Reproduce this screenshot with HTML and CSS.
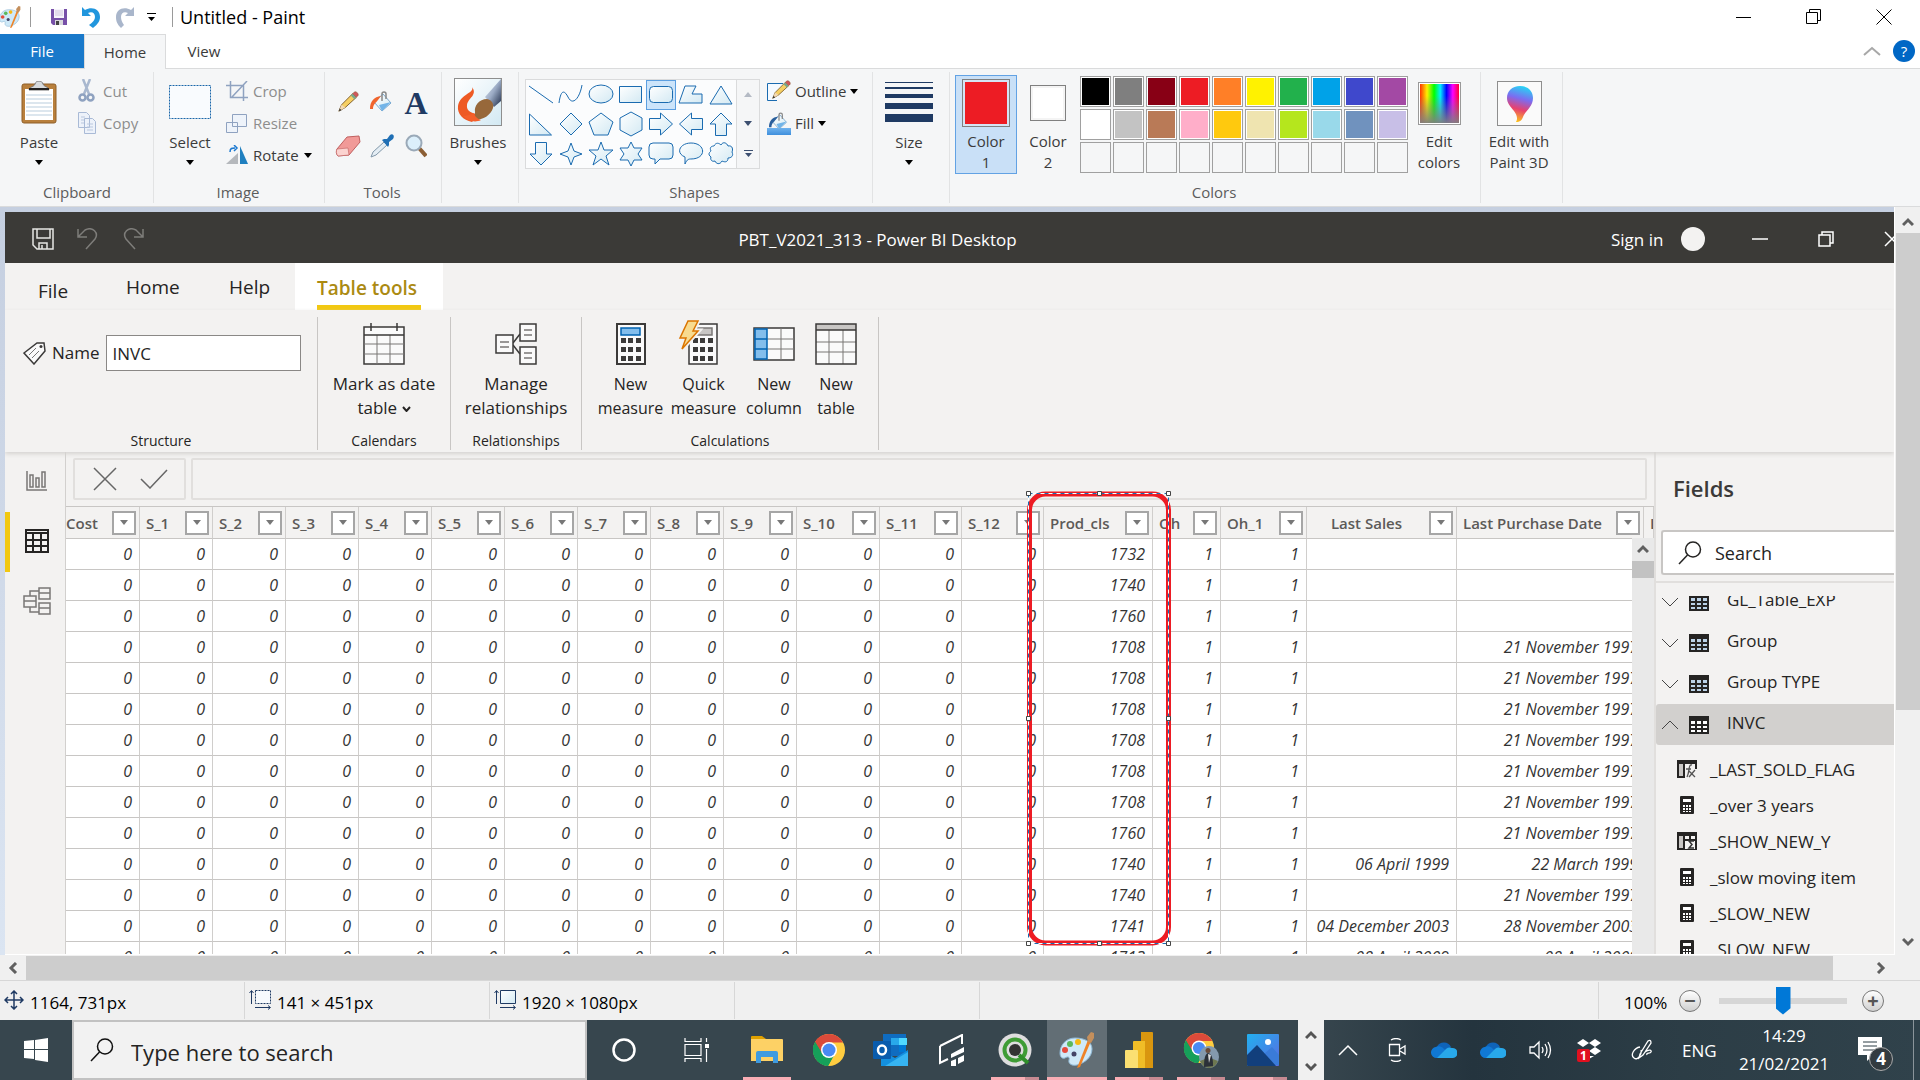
FILE: index.html
```html
<!DOCTYPE html>
<html lang="en">
<head>
<meta charset="utf-8">
<title>Untitled - Paint</title>
<link rel="stylesheet" href="styles.css">
</head>
<body>
<svg class="defs" aria-hidden="true">
  <defs>
    <linearGradient id="pale" x1="0" y1="0" x2="1" y2="1"><stop offset="0" stop-color="#fff"/><stop offset="1" stop-color="#d3e9f3"/></linearGradient>
    <linearGradient id="blueG" x1="0" y1="0" x2="0" y2="1"><stop offset="0" stop-color="#6fb2ee"/><stop offset="1" stop-color="#3f8fdc"/></linearGradient>
    <linearGradient id="steel" x1="0" y1="0" x2="1" y2="1"><stop offset="0" stop-color="#e8eef8"/><stop offset=".5" stop-color="#9aaac4"/><stop offset="1" stop-color="#1e2c48"/></linearGradient>
    <linearGradient id="rainbow"><stop offset="0" stop-color="#f30"/><stop offset=".18" stop-color="#fe0"/><stop offset=".36" stop-color="#0f0"/><stop offset=".52" stop-color="#0ef"/><stop offset=".68" stop-color="#00f"/><stop offset=".84" stop-color="#f0f"/><stop offset="1" stop-color="#f03"/></linearGradient>
    <linearGradient id="fadeGrey" x1="0" y1="0" x2="0" y2="1"><stop offset=".3" stop-color="#808080" stop-opacity="0"/><stop offset="1" stop-color="#808080" stop-opacity=".95"/></linearGradient>
    <linearGradient id="p3d" x1=".6" y1="0" x2=".4" y2="1"><stop offset="0" stop-color="#25d5f5"/><stop offset=".35" stop-color="#7c6cf0"/><stop offset=".65" stop-color="#e8416e"/><stop offset="1" stop-color="#fcc419"/></linearGradient>
    <linearGradient id="sky" x1="0" y1="0" x2="1" y2="1"><stop offset="0" stop-color="#22b0f0"/><stop offset="1" stop-color="#5a6be0"/></linearGradient>
    <symbol id="caret" viewBox="0 0 8 5"><path d="M0 0h8L4 5z" fill="currentColor"/></symbol>
    <symbol id="chev-up" viewBox="0 0 12 10"><path d="M1 8l5-5 5 5" fill="none" stroke="currentColor" stroke-width="3"/></symbol>
    <symbol id="calc" viewBox="0 0 14 18"><rect width="14" height="18" rx="1" fill="#252423"/><path d="M3 3h8v3H3zM3 9h2v2H3zm3 0h2v2H6zm3 0h2v2H9zM3 12h2v2H3zm3 0h2v2H6zm3 0h2v2H9zM3 15h2v1H3zm3 0h2v1H6zm3 0h2v1H9z" fill="#fff"/></symbol>
    <symbol id="grid" viewBox="0 0 20 18"><path d="M0 0h20v18H0z" fill="#252423"/><path d="M2 5h4v3H2zm6 0h4v3H8zm6 0h4v3h-4zM2 10h4v2H2zm6 0h4v2H8zm6 0h4v2h-4zM2 14h4v2H2zm6 0h4v2H8zm6 0h4v2h-4z" fill="currentColor"/></symbol>
    <symbol id="palette" viewBox="0 0 36 36"><path d="M16 6C7 6 1 13 1 21c0 4 2 6 5 5 3-2 5-1 4 2-1 4 3 6 8 5 8-2 15-8 15-16 0-7-7-11-17-11z" fill="#cfe9f8" stroke="#8fb8d4"/><circle cx="15" cy="22" r="2.5" fill="#446"/><circle cx="6" cy="18" r="3" fill="#e54b3c"/><circle cx="11" cy="12" r="3" fill="#5cb85c"/><circle cx="19" cy="10" r="3" fill="#f5b915"/><path d="M29 8l3 1-11 26-3 1z" fill="#ee8327"/><path d="M29 10l-1-5 4-5 3 1 0 5-3 5z" fill="#c48f5c"/></symbol>
    <symbol id="cloud" viewBox="0 0 26 18"><path d="M7 17a6 6 0 0 1-1-11.500A8 8 0 0 1 20 6z" fill="#0f63b8"/><path d="M5 6a6 6 0 0 1 8 2l7 6-12 3H6A5.500 5.500 0 0 1 5 6z" fill="#1078d4"/><path d="M15 8a6 6 0 0 1 6-1 5 5 0 0 1 1 10H6z" fill="#28a8ea"/></symbol>
    <symbol id="chrome" viewBox="0 0 34 34"><circle cx="17" cy="17" r="16" fill="#ffcd40"/><path d="M17 17L3 9A16 16 0 0 1 31 9.500H17z" fill="#db4a3a"/><path d="M3.100 9A16 16 0 0 0 16 33l7-12.500L17 17z" fill="#0f9d58"/><path d="M3.100 9L10 21l7-4V9z" fill="#db4a3a"/><path d="M10.500 21L3.100 9A16 16 0 0 0 16 33l6.500-12z" fill="#16a05a"/><circle cx="17" cy="17" r="8" fill="#fff"/><circle cx="17" cy="17" r="6.500" fill="#4a8af4"/></symbol>
    <symbol id="bucket" viewBox="0 0 24 24"><path d="M4 12L13 4l8 9-9 8z" fill="url(#pale)" stroke="#7aa7cd"/><path d="M9 15l12-3-9 9z" fill="#72b4e8"/><path d="M12 11V4a2 2 0 0 1 4 0v5" fill="none" stroke="#888" stroke-width="1.500"/><path d="M11 6C4 7 0 11 0 19h3c0-5 3-6 5-9z" fill="currentColor"/></symbol>
    <symbol id="pencil" viewBox="0 0 24 24"><path d="M2 22l3-7L17 3l4 4L9 18z" fill="#f6cf62" stroke="#7b5a28"/><path d="M2 22l3-7 4 3z" fill="#f2d9b4"/><path d="M2 22l1-3 2 2z" fill="#333"/><path d="M17 3l2-2c2-1 5 2 4 4l-2 2z" fill="#d1575b" stroke="#7b5a28" stroke-width=".5"/><path d="M15 5l2-2 4 4-2 2z" fill="#7aa58c"/></symbol>
  </defs>
</svg>

<header class="titlebar">
  <div class="quick">
    <svg class="app-logo" viewBox="3 0 33 36"><use href="#palette"/></svg>
    <span class="rule"></span>
    <button aria-label="Save"><svg width="16" height="16" viewBox="0 0 16 16"><path d="M0 0h16v16H2l-2-2z" fill="#7750a8"/><path d="M3 0h10v9H3z" fill="#f7f4fb"/><path d="M4 2h8M4 4h8M4 6h8" stroke="#cfc5dd"/><path d="M4 11h8v5H4z" fill="#d8d8dc"/><path d="M5 12h3v4H5z" fill="#444"/></svg></button>
    <button aria-label="Undo"><svg width="20" height="22" viewBox="0 0 20 22"><path d="M1 1v9h9L7 7c4-2 7 0 7 4 0 3-2 5-6 8l4 3c5-4 7-7 7-11 0-8-8-11-15-7z" fill="#2196dd"/></svg></button>
    <button aria-label="Redo"><svg width="20" height="22" viewBox="0 0 20 22"><path d="M19 1v9h-9l3-3c-4-2-7 0-7 4 0 3 1 5 3 8l-3 3C2 18 1 15 1 11 1 3 9 0 16 4z" fill="#a9b6cb"/></svg></button>
    <button aria-label="Customize"><svg width="9" height="8" viewBox="0 0 9 8"><path d="M0 0h9v1H0zM1 4h7L4.500 8z"/></svg></button>
    <span class="rule"></span>
    <h1>Untitled - Paint</h1>
  </div>
  <div class="winbtns">
    <button aria-label="Minimize"><svg width="16" height="16" viewBox="0 0 16 16"><path d="M0 8.500h15" stroke="#000"/></svg></button>
    <button aria-label="Restore"><svg width="16" height="16" viewBox="0 0 16 16"><path d="M.5 3.500h11v11H.5zM3.500 3.500v-3h11v11h-3" fill="none" stroke="#000"/></svg></button>
    <button aria-label="Close"><svg width="16" height="16" viewBox="0 0 16 16"><path d="M.5.5l15 15m0-15l-15 15" stroke="#000"/></svg></button>
  </div>
</header>

<nav class="tabs">
  <button class="tab file">File</button><button class="tab active">Home</button><button class="tab">View</button>
  <div class="tabs-right">
    <svg width="18" height="10" viewBox="0 0 18 10"><path d="M1 9l8-7 8 7" fill="none" stroke="#a8a8a8" stroke-width="2"/></svg>
    <button class="help" aria-label="Help">?</button>
  </div>
</nav>

<section class="ribbon">
  <div class="group g-clip">
    <div class="tools">
      <button class="big"><span class="pic"><svg width="36" height="43" viewBox="0 0 36 43"><rect x="1" y="3" width="34" height="39" rx="2" fill="#b9803d" stroke="#8f5f28"/><path d="M4 8h28v31H4z" fill="#fff"/><path d="M5 14h26M5 18h26M5 22h26M5 26h26M5 30h26M5 34h26" stroke="#b9cddd"/><path d="M8 9c1-4 5-3 6-6 1-4 7-4 8 0 1 3 5 2 6 6z" fill="#d7dadd" stroke="#777"/><path d="M8 8h20" stroke="#222" stroke-width="2"/></svg></span><span>Paste</span><svg class="caret"><use href="#caret"/></svg></button>
      <div class="stack">
        <button class="row off"><svg width="18" height="24" viewBox="0 0 18 24"><path d="M5 0l6 15M12 0L6 15" stroke="#a9b8cf" stroke-width="2.500"/><circle cx="4.500" cy="18.500" r="3" fill="none" stroke="#8fa2c0" stroke-width="2.500"/><circle cx="12.500" cy="18.500" r="3" fill="none" stroke="#8fa2c0" stroke-width="2.500"/></svg>Cut</button>
        <button class="row off"><svg width="18" height="22" viewBox="0 0 18 22"><path d="M.5.500h8l3 3v12H.5zM6.500 6.500h8l3 3v12h-11z" fill="#edf2fa" stroke="#a9bad6"/><path d="M3 5h4M3 8h3M3 11h3M9 12h6M9 15h6M9 18h6" stroke="#b9c7de"/></svg>Copy</button>
      </div>
    </div>
    <div class="label">Clipboard</div>
  </div>
  <div class="group g-image">
    <div class="tools">
      <button class="big"><span class="pic"><svg width="42" height="34" viewBox="0 0 42 34"><rect x=".5" y=".5" width="41" height="33" fill="#f9fbfe" stroke="#1a66aa" stroke-dasharray="2 1"/></svg></span><span>Select</span><svg class="caret"><use href="#caret"/></svg></button>
      <div class="stack">
        <button class="row off"><svg width="22" height="20" viewBox="0 0 22 20"><path d="M0 4.500h17.500V20M4.500 0v16.500H22M6 16L21 0" fill="none" stroke="#8fa2c0" stroke-width="1.500"/></svg>Crop</button>
        <button class="row off"><svg width="22" height="19" viewBox="0 0 22 19"><path d="M.5 8.500h11v10H.5zM6.500.500h14v12h-14z" fill="#eef3fa" stroke="#8fa2c0"/></svg>Resize</button>
        <button class="row"><svg width="22" height="20" viewBox="0 0 22 20"><path d="M14 1l8 18h-8z" fill="#1f7fbf"/><path d="M12 8v11H0z" fill="#b5b8bc"/><path d="M4 7c0-4 2-4 5-4M8 0l3 3-3 3" fill="none" stroke="#1a78d0" stroke-width="1.500"/></svg>Rotate<svg class="caret"><use href="#caret"/></svg></button>
      </div>
    </div>
    <div class="label">Image</div>
  </div>
  <div class="group g-tools">
    <div class="toolgrid">
      <button aria-label="Pencil"><svg width="22" height="22" viewBox="0 0 24 24"><use href="#pencil"/></svg></button>
      <button aria-label="Fill with color" class="orange"><svg width="24" height="24"><use href="#bucket"/></svg></button>
      <button aria-label="Text" class="text-a">A</button>
      <button aria-label="Eraser"><svg width="26" height="22" viewBox="0 0 26 22"><path d="M2 14L12 2l12-1 1 6-11 13-11 1c-2-2-2-5-1-7z" fill="#f19a98" stroke="#c0605f"/><path d="M2 14l11-1 1 7-11 1c-2-2-2-5-1-7z" fill="#fbd3d0" stroke="#c0605f" stroke-width=".6"/></svg></button>
      <button aria-label="Color picker"><svg width="24" height="24" viewBox="0 0 24 24"><path d="M1 23l2-5L14 8l3 3L6 21z" fill="#e4edf4" stroke="#8298aa"/><path d="M12 6l2-1 3 0 3-4c3-2 5 1 3 4l-4 3v3l-1 2z" fill="#1f6fb5"/></svg></button>
      <button aria-label="Magnifier"><svg width="22" height="24" viewBox="0 0 22 24"><path d="M14 14l7 8" stroke="#8b5e34" stroke-width="4"/><circle cx="9" cy="9" r="7.500" fill="#dceffb" stroke="#9aa9b8" stroke-width="2"/></svg></button>
    </div>
    <div class="label">Tools</div>
  </div>
  <div class="group g-brush">
    <div class="tools">
      <button class="big"><span class="pic framed"><svg width="46" height="46" viewBox="0 0 46 46"><path d="M0 0h46v46H0z" fill="url(#pale)"/><path d="M46 0L30 18l9 10 7-6z" fill="url(#steel)"/><path d="M17 8c3 6-12 7-14 19-1 8 5 14 14 16l8-8c-8 0-14-3-13-9 1-7 11-10 5-18z" fill="#ee5a24"/><path d="M20 33c-1-6 4-13 12-13 5 1 7 5 6 9-2 7-10 12-18 12z" fill="#97683a"/><path d="M8 37c5 5 12 7 18 4-4-1-6-4-8-7-3 2-6 3-10 3z" fill="#f4602b"/></svg></span><span>Brushes</span><svg class="caret"><use href="#caret"/></svg></button>
    </div>
  </div>
  <div class="group g-shapes">
    <div class="tools">
      <div class="gallery">
        <svg class="shapes" viewBox="0 0 210 88"><g fill="url(#pale)" stroke="#1a6bb0">
          <path d="M3 6l24 17" fill="none"/><path d="M33 23c2-15 6-12 9-6 5 10 12 0 14-12" fill="none"/><ellipse cx="75" cy="14" rx="12" ry="9"/><path d="M93.500 6.500h22v16h-22z"/>
          <rect x="120.500" y=".5" width="29" height="29" fill="#cce4fa" stroke="#5c9fe0"/><rect x="123.500" y="6.500" width="23" height="16" rx="4"/><path d="M159 6h11l-4 8h10v9h-23z"/><path d="M195 6l11 18h-22z"/>
          <path d="M3.500 34v21h22z"/><path d="M45 33l11 11-11 11-11-11z"/><path d="M75 33l12 9-5 13H68l-5-13z"/><path d="M105 32l11 6v12l-11 6-11-6V38z"/><path d="M123.500 38.500h11V33l12 11-12 11v-5.500h-11z"/><path d="M176.500 38.500h-11V33l-12 11 12 11v-5.500h11z"/><path d="M189.500 55.500V44H184l11-11 11 11h-5.500v11.500z"/>
          <path d="M39.500 62.500V74H34l11 11 11-11h-5.500V62.500z" transform="translate(-30)"/><path d="M45 63l3 8 8 3-8 3-3 8-3-8-8-3 8-3z"/><path d="M75 62l3 8h9l-7 6 3 9-8-6-8 6 3-9-7-6h9z"/><path d="M105 62l3 6h8l-4 6 4 6h-8l-3 6-3-6h-8l4-6-4-6h8z"/><path d="M127 63h16q4 0 4 4v8q0 4-4 4h-9l-5 5v-5h-2q-4 0-4-4v-8q0-4 4-4z"/><path d="M165 63c15 0 16 16 0 16-2 0-4 0-6 5v-7c-10-4-5-14 6-14z"/><path d="M188 66c2-4 5-3 7-1 2-4 6-2 7 1 5-1 5 4 4 6 2 4-1 6-4 6 0 5-4 4-6 3-2 4-6 3-7 0-3 1-5-1-4-4-4-3-1-5 0-6-2-4 1-5 3-5z"/>
        </g></svg>
        <div class="gal-scroll">
          <button aria-label="Scroll up" class="dim"><svg class="caret flip"><use href="#caret"/></svg></button>
          <button aria-label="Scroll down"><svg class="caret"><use href="#caret"/></svg></button>
          <button aria-label="More shapes"><svg width="9" height="7" viewBox="0 0 9 7"><path d="M0 0h9v1H0zM1 3h7L4.500 7z" fill="currentColor"/></svg></button>
        </div>
      </div>
      <div class="stack">
        <button class="row"><svg width="24" height="22" viewBox="0 0 24 22"><path d="M16 3.500H.5v17H10" fill="#f5faff" stroke="#1a6bb0"/><use href="#pencil" x="4" width="20" height="20"/></svg>Outline<svg class="caret"><use href="#caret"/></svg></button>
        <button class="row navy"><svg width="24" height="24" viewBox="0 0 24 24"><path d="M0 17h24v7H0z" fill="url(#blueG)"/><use href="#bucket" x="2" width="20" height="21"/></svg>Fill<svg class="caret"><use href="#caret"/></svg></button>
      </div>
    </div>
    <div class="label">Shapes</div>
  </div>
  <div class="group g-size">
    <div class="tools">
      <button class="big"><span class="pic"><svg width="48" height="42" viewBox="0 0 48 42"><path d="M0 1h48v1H0zM0 6h48v2H0zM0 13h48v4H0zM0 22h48v6H0zM0 33h48v8H0z" fill="#1f3a63"/></svg></span><span>Size</span><svg class="caret"><use href="#caret"/></svg></button>
    </div>
  </div>
  <div class="group g-colors">
    <div class="tools">
      <button class="big color on"><span class="pic"><i class="swatch s1"></i></span><span>Color<br>1</span></button>
      <button class="big color"><span class="pic"><i class="swatch s2"></i></span><span>Color<br>2</span></button>
      <div class="pal">
        <i class="black"></i><i class="grey"></i><i class="darkred"></i><i class="red"></i><i class="orange-c"></i><i class="yellow"></i><i class="green"></i><i class="turq"></i><i class="indigo"></i><i class="purple"></i>
        <i class="white"></i><i class="lgrey"></i><i class="brown"></i><i class="rose"></i><i class="gold"></i><i class="ltyellow"></i><i class="lime"></i><i class="ltturq"></i><i class="bluegrey"></i><i class="lavender"></i>
        <i></i><i></i><i></i><i></i><i></i><i></i><i></i><i></i><i></i><i></i>
      </div>
      <button class="big color edit"><span class="pic"><svg width="43" height="43" viewBox="0 0 43 43"><path d="M0 0h43v43H0z" fill="#999"/><path d="M1 1h41v41H1z" fill="#fff"/><path d="M2 2h39v39H2z" fill="url(#rainbow)"/><path d="M2 2h39v39H2z" fill="url(#fadeGrey)"/></svg></span><span>Edit<br>colors</span></button>
    </div>
    <div class="label">Colors</div>
  </div>
  <div class="group g-3d">
    <div class="tools">
      <button class="big color"><span class="pic"><svg width="45" height="45" viewBox="0 0 45 45"><rect x=".5" y=".5" width="44" height="44" fill="#fafafa" stroke="#8e8e8e"/><path d="M23 5c8 0 13 5 13 12 0 9-8 13-10 19-1 3-3 5-7 5 2-3 1-7-2-11-4-5-7-8-7-13C10 10 15 5 23 5z" fill="url(#p3d)"/></svg></span><span>Edit with<br>Paint 3D</span></button>
    </div>
  </div>
</section>

<main class="viewport">
  <div class="picture">
    <div class="pbi-title">
      <div class="pbi-quick">
        <svg width="22" height="22" viewBox="0 0 22 22"><path d="M1 1h20v20H5l-4-4zM5 1v9h13V1M7 21v-6h8v6M10 17v4" fill="none" stroke="#e6e6e4" stroke-width="1.500"/></svg>
        <svg width="22" height="22" viewBox="0 0 22 22"><path d="M1 1v8h9M1 9l7-7c8-4 14 3 10 9L9 21" fill="none" stroke="#7e7d7a" stroke-width="1.500"/></svg>
        <svg width="22" height="22" viewBox="0 0 22 22"><path d="M21 1v8h-9M21 9l-7-7C6-2 0 5 4 11l9 10" fill="none" stroke="#7e7d7a" stroke-width="1.500"/></svg>
      </div>
      <div class="pbi-name">PBT_V2021_313 - Power BI Desktop</div>
      <div class="pbi-right">
        <span>Sign in</span><i class="avatar"></i>
        <svg width="16" height="16" viewBox="0 0 16 16"><path d="M0 8h16" stroke="#fff" stroke-width="1.500"/></svg>
        <svg width="16" height="16" viewBox="0 0 16 16"><path d="M1 4h11v11H1zM4 4V1h11v11h-3" fill="none" stroke="#fff" stroke-width="1.500"/></svg>
        <svg width="16" height="16" viewBox="0 0 16 16"><path d="M1 1l14 14m0-14L1 15" stroke="#fff" stroke-width="1.500"/></svg>
      </div>
    </div>
    <div class="pbi-tabs">
      <button class="p-file">File</button><button class="p-home">Home</button><button class="p-help">Help</button><button class="p-on"><span>Table tools</span></button>
    </div>
    <div class="pbi-ribbon">
      <div class="pg pg-struct">
        <div class="namebox">
          <svg width="24" height="24" viewBox="0 0 24 24"><path d="M2 12L15 2l7 0 1 8-11 13z" fill="#fafafa" stroke="#3b3a39" stroke-width="1.500"/><circle cx="19" cy="5.500" r="1.500" fill="#3b3a39"/><path d="M7 14l7-7M10 17l7-7" stroke="#777"/></svg>
          <label for="tname">Name</label><input id="tname" type="text" value="INVC">
        </div>
        <div class="pl">Structure</div>
      </div>
      <div class="pg pg-cal">
        <div class="pbtns"><button><svg width="42" height="42" viewBox="0 0 42 42"><path d="M1 4h40v37H1z" fill="#fafafa" stroke="#3b3a39" stroke-width="1.500"/><path d="M1 21h40M1 31h40M14 12v29M27 12v29" stroke="#797775"/><path d="M1 12h40M8 0v8M34 0v8" stroke="#3b3a39" stroke-width="1.500"/></svg><span>Mark as date<br>table <svg width="9" height="6" viewBox="0 0 9 6"><path d="M1 1l3.500 4L8 1" fill="none" stroke="#252423" stroke-width="2"/></svg></span></button></div>
        <div class="pl">Calendars</div>
      </div>
      <div class="pg pg-rel">
        <div class="pbtns"><button><svg width="42" height="42" viewBox="0 0 42 42"><path d="M18 20l7-9M18 22l7 9" stroke="#3b3a39" stroke-width="1.500"/><path d="M1 12h17v18H1zM25 1h16v17H25zM25 24h16v17H25z" fill="#fafafa" stroke="#3b3a39" stroke-width="1.500"/><path d="M5 19h9M5 24h9M29 7h8M29 12h8M29 30h8M29 35h8" stroke="#797775" stroke-width="1.500"/></svg><span>Manage<br>relationships</span></button></div>
        <div class="pl">Relationships</div>
      </div>
      <div class="pg pg-calc">
        <div class="pbtns">
          <button class="w72"><svg width="42" height="42" viewBox="0 0 42 42"><path d="M7 1h28v40H7z" fill="#fafafa" stroke="#3b3a39" stroke-width="2"/><path d="M11 5h19v7H11z" fill="#83beec" stroke="#0063b1" stroke-width="1.500"/><path d="M11 15h5v5h-5zm7 0h5v5h-5zm8 0h5v5h-5zM11 24h5v5h-5zm7 0h5v5h-5zm8 0h5v5h-5zM11 33h5v5h-5zm7 0h5v5h-5zm8 0h5v5h-5z" fill="#3b3a39"/></svg><span>New<br>measure</span></button>
          <button class="w72"><svg class="spill" width="42" height="42" viewBox="0 0 42 42"><path d="M6 1h28v40H6z" fill="#fafafa" stroke="#3b3a39" stroke-width="1.500"/><path d="M10 5h19v7H10z" fill="#c8c6c4" stroke="#797775" stroke-width="1.500"/><path d="M10 15h5v5h-5zm7 0h5v5h-5zm8 0h5v5h-5zM10 24h5v5h-5zm7 0h5v5h-5zm8 0h5v5h-5zM10 33h5v5h-5zm7 0h5v5h-5zm8 0h5v5h-5z" fill="#3b3a39"/><path d="M5-2h10l-5 10h5L-1 26l4-11h-6z" fill="#f8db8f" stroke="#f3f2f1" stroke-width="5"/><path d="M5-2h10l-5 10h5L-1 26l4-11h-6z" fill="#f8db8f" stroke="#db7500" stroke-width="1.500"/></svg><span>Quick<br>measure</span></button>
          <button class="w68"><svg width="42" height="42" viewBox="0 0 42 42"><path d="M1 5h40v32H1z" fill="#fafafa" stroke="#3b3a39" stroke-width="1.500"/><path d="M28 5v32M14 16h27M14 26h27" stroke="#797775"/><path d="M2 6h12v30H2zM2 16h12M2 26h12" fill="#83beec" stroke="#0063b1" stroke-width="1.500"/></svg><span>New<br>column</span></button>
          <button class="w56"><svg width="42" height="42" viewBox="0 0 42 42"><path d="M1 1h40v40H1z" fill="#fafafa"/><path d="M1 1h40v6H1z" fill="#c8c6c4"/><path d="M1 19h40M1 29h40M14 7v34M28 7v34" stroke="#797775"/><path d="M1 1h40v40H1zM1 7h40" fill="none" stroke="#3b3a39" stroke-width="1.500"/></svg><span>New<br>table</span></button>
        </div>
        <div class="pl">Calculations</div>
      </div>
    </div>
    <div class="pbi-body">
      <nav class="side">
        <button aria-label="Report"><svg width="22" height="22" viewBox="0 0 22 22"><path d="M1 1v19h20" fill="none" stroke="#797775" stroke-width="1.500"/><path d="M4 5h3v12H4zM10 8h3v9h-3zM16 2h3v15h-3z" fill="none" stroke="#797775" stroke-width="1.500"/></svg></button>
        <button aria-label="Data" class="on"><svg width="24" height="24" viewBox="0 0 24 24"><path d="M1 1h22v22H1zM1 11h22M1 17h22M8 5v18M16 5v18" fill="none" stroke="#252423" stroke-width="2"/><path d="M1 4h22" stroke="#252423" stroke-width="2"/></svg></button>
        <button aria-label="Model"><svg width="28" height="28" viewBox="0 0 28 28"><path d="M1 9h12v11H1zM1 14h12M16 1h11v11H16zM16 6h11M16 16h11v11H16zM16 21h11M7 9V4h9M7 20v5h9" fill="none" stroke="#797775" stroke-width="1.500"/></svg></button>
      </nav>
      <section class="data">
        <div class="formula">
          <div class="fbtns">
            <button aria-label="Cancel"><svg width="24" height="24" viewBox="0 0 24 24"><path d="M1 1l22 22M23 1L1 23" stroke="#666" stroke-width="1.500"/></svg></button>
            <button aria-label="Commit"><svg width="28" height="20" viewBox="0 0 28 20"><path d="M1 10l9 9L27 1" fill="none" stroke="#666" stroke-width="1.500"/></svg></button>
          </div>
          <input type="text" aria-label="Formula">
        </div>
        <div class="tablewrap">
          <table>
            <colgroup><col class="c74"><col class="c73" span="9"><col class="c83"><col class="c82" span="2"><col class="c109"><col class="c68"><col class="c86"><col class="c150"><col class="c187"><col></colgroup>
            <thead><tr></tr></thead>
            <tbody></tbody>
          </table>
          <div class="tscroll"><svg width="12" height="10"><use href="#chev-up"/></svg><i></i></div>
        </div>
        <svg class="marquee" width="146" height="456" viewBox="0 0 146 456"><rect x="3.500" y="3" width="139" height="449" rx="16" fill="none" stroke="#ed1c24" stroke-width="5"/><rect x="2.500" y="2.500" width="140" height="450" fill="none" stroke="#fff"/><rect x="2.500" y="2.500" width="140" height="450" fill="none" stroke="#1a6bb0" stroke-dasharray="4 4"/><path d="M.5.500h4v4h-4zM71.500.500h4v4h-4zM140.500.500h4v4h-4zM.5 225.500h4v4h-4zM140.500 225.500h4v4h-4zM.5 450.500h4v4h-4zM71.500 450.500h4v4h-4zM140.500 450.500h4v4h-4z" fill="#fff" stroke="#444"/></svg>
      </section>
      <aside class="fields">
        <h2>Fields</h2>
        <div class="fsearch"><svg width="24" height="24" viewBox="0 0 24 24"><circle cx="15" cy="8.500" r="7.500" fill="none" stroke="#252423" stroke-width="1.500"/><path d="M9.500 14L1 23" stroke="#252423" stroke-width="1.500"/></svg><input type="text" placeholder="Search" aria-label="Search fields"></div>
        <div class="tree">
          <ul>
            <li class="t cut"><svg class="ch" viewBox="0 0 18 10"><path d="M1 1l8 8 8-8"/></svg><svg class="gi"><use href="#grid"/></svg><span>GL_Table_EXP</span></li>
            <li class="t"><svg class="ch" viewBox="0 0 18 10"><path d="M1 1l8 8 8-8"/></svg><svg class="gi"><use href="#grid"/></svg><span>Group</span></li>
            <li class="t"><svg class="ch" viewBox="0 0 18 10"><path d="M1 1l8 8 8-8"/></svg><svg class="gi"><use href="#grid"/></svg><span>Group TYPE</span></li>
            <li class="t sel"><svg class="ch" viewBox="0 0 18 10"><path d="M1 9l8-8 8 8"/></svg><svg class="gi plain"><use href="#grid"/></svg><span>INVC</span></li>
            <li class="f first"><svg width="20" height="18" viewBox="0 0 20 18"><path d="M0 0h20v4H0zM0 0h2v18H0zM6 4h2v14H6zM0 16h8v2H0zM18 4h2v5h-2z" fill="#252423"/><path d="M2 4h4v12H2z" fill="#c8c6c4"/><path d="M15 5c-4-1-2 6-5 12M9 9h5M12 11l6 6M18 10l-6 7" fill="none" stroke="#555" stroke-width="1.300"/></svg><span>_LAST_SOLD_FLAG</span></li>
            <li class="f"><svg width="20" height="18"><use href="#calc"/></svg><span>_over 3 years</span></li>
            <li class="f"><svg width="20" height="18" viewBox="0 0 20 18"><path d="M0 0h20v18H0z" fill="#252423"/><path d="M2 4h4v12H2z" fill="#c8c6c4"/><path d="M8 4h4v3H8zM14 4h4v3h-4zM8 9h10v8H8z" fill="#f3f2f1"/><path d="M17 9h-5l3 3.500-3 3.500h5" fill="none" stroke="#333" stroke-width="1.500"/></svg><span>_SHOW_NEW_Y</span></li>
            <li class="f"><svg width="20" height="18"><use href="#calc"/></svg><span>_slow moving item</span></li>
            <li class="f"><svg width="20" height="18"><use href="#calc"/></svg><span>_SLOW_NEW</span></li>
            <li class="f"><svg width="20" height="18"><use href="#calc"/></svg><span>_SLOW_NEW</span></li>
          </ul>
        </div>
      </aside>
    </div>
  </div>
  <div class="vscroll"><svg width="12" height="10"><use href="#chev-up"/></svg><i></i><svg class="flip" width="12" height="10"><use href="#chev-up"/></svg></div>
</main>
<div class="hscroll"><svg class="left" width="12" height="10"><use href="#chev-up"/></svg><i></i><svg class="right" width="12" height="10"><use href="#chev-up"/></svg></div>

<footer class="status">
  <div class="cell"><svg width="20" height="20" viewBox="0 0 20 20"><path d="M10 1v18M1 10h18M7 4l3-3 3 3M7 16l3 3 3-3M4 7l-3 3 3 3M16 7l3 3-3 3" fill="none" stroke="#1f3a63" stroke-width="1.500"/></svg><span>1164, 731px</span></div>
  <div class="cell"><svg width="22" height="20" viewBox="0 0 22 20"><path d="M6.500.500h15v13h-15z" fill="#f7fafd" stroke="#1f3a63" stroke-dasharray="2 1"/><path d="M2.500 14V1M.5 3l2-2.500 2 2.500M6 17.500h15M19 15.500l2.500 2-2.500 2" fill="none" stroke="#1f3a63"/></svg><span>141 × 451px</span></div>
  <div class="cell"><svg width="22" height="20" viewBox="0 0 22 20"><path d="M6.500.500h15v13h-15z" fill="url(#pale)" stroke="#1f3a63"/><path d="M2.500 14V1M.5 3l2-2.500 2 2.500M6 17.500h15M19 15.500l2.500 2-2.500 2" fill="none" stroke="#1f3a63"/></svg><span>1920 × 1080px</span></div>
  <div class="cell"></div>
  <div class="cell wide"></div>
  <div class="zoom"><label for="zoom">100%</label><button aria-label="Zoom out">−</button><input id="zoom" type="range" min="0" max="100" value="50"><button aria-label="Zoom in">+</button></div>
</footer>

<div class="taskbar">
  <button class="start" aria-label="Start"><svg width="24" height="24" viewBox="0 0 24 24"><path d="M0 3l10-1v9H0zM11 2l13-2v11H11zM0 12h10v9L0 20zM11 12h13v12l-13-2z" fill="#fff"/></svg></button>
  <div class="tsearch"><svg width="24" height="24" viewBox="0 0 24 24"><circle cx="15" cy="8.500" r="7.500" fill="none" stroke="#111" stroke-width="1.500"/><path d="M9.500 14L1 23" stroke="#111" stroke-width="1.500"/></svg><input type="text" placeholder="Type here to search" aria-label="Search Windows"></div>
  <button class="sys" aria-label="Cortana"><svg width="24" height="24" viewBox="0 0 24 24"><circle cx="12" cy="12" r="10.500" fill="none" stroke="#fff" stroke-width="2.500"/></svg></button>
  <button class="sys" aria-label="Task view"><svg width="26" height="24" viewBox="0 0 26 24"><path d="M1 0v3.500h16V0M1 6.500h16v11H1zM1 24v-3.500h16V24M22.500 0v4M22.500 11v13" fill="none" stroke="#fff" stroke-width="1.200"/><path d="M21 6h4v4h-4z" fill="#fff"/></svg></button>
  <button class="app open" aria-label="File Explorer"><svg width="34" height="30" viewBox="0 0 34 30"><path d="M1 2q0-1 1-1h10l4 3H1z" fill="#e0a100"/><path d="M1 4h31q1 0 1 1v21H1z" fill="#fdd165"/><path d="M6 28V18q0-2 2-2h18q2 0 2 2v10h-5v-6H11v6z" fill="#3f9be0"/></svg></button>
  <button class="app" aria-label="Chrome"><svg width="34" height="34"><use href="#chrome"/></svg></button>
  <button class="app" aria-label="Outlook"><svg width="36" height="32" viewBox="0 0 36 32"><path d="M10 0h23v22H10z" fill="#0f6cc0"/><path d="M18 4h8v7h-8z" fill="#28a8ea"/><path d="M26 4h8v7h-8z" fill="#50d9ff"/><path d="M26 11h7v7h-7z" fill="#0078d4"/><path d="M8 16l14 8 13-8v16H8z" fill="#1490df"/><path d="M35 18v14H12z" fill="#36b4f2"/><rect y="7" width="18" height="18" rx="1" fill="#0a5cad"/><ellipse cx="9" cy="16" rx="4" ry="4.500" fill="none" stroke="#fff" stroke-width="2.500"/></svg></button>
  <button class="app" aria-label="Data app"><svg width="30" height="32" viewBox="0 0 30 32"><path d="M2 12L24 1v9M2 12v17l8-4" fill="none" stroke="#fff" stroke-width="2"/><path d="M13 20l13-7v5l-13 6zM13 27l5-2v7l-5 0zM20 24l6-3v6l-6 3z" fill="#fff"/></svg></button>
  <button class="app open multi" aria-label="Qlik Sense"><svg width="34" height="34" viewBox="0 0 34 34"><circle cx="17" cy="17" r="16.500" fill="#deddde"/><circle cx="17" cy="17" r="10.500" fill="none" stroke="#3f9c35" stroke-width="4"/><path d="M21 22l9 8" stroke="#2f8f2b" stroke-width="4"/><circle cx="17" cy="17" r="6" fill="#333"/></svg></button>
  <button class="app open current" aria-label="Paint"><svg width="36" height="36"><use href="#palette"/></svg></button>
  <button class="app open multi" aria-label="Power BI"><svg width="28" height="36" viewBox="0 0 28 36"><path d="M16 0h11q1 0 1 1v35H16z" fill="#d9960f"/><path d="M8 10q0-1 1-1h11v27H8z" fill="#f0bd27"/><path d="M0 19q0-1 1-1h11q1 0 1 1v17H0z" fill="#fbe072"/></svg></button>
  <button class="app open multi" aria-label="Chrome profile"><svg width="36" height="38" viewBox="0 0 36 38"><use href="#chrome" width="32" height="34"/><ellipse cx="26" cy="26" rx="10" ry="11" fill="#8499ad"/><path d="M17 30q9-5 18 0-3 7-9 7t-9-7z" fill="#6d7750"/><path d="M21 36c0-8 1-13 4-14 4 1 5 5 5 13z" fill="#2b3038"/><path d="M25 23l3 1-2 8z" fill="#ddd"/><circle cx="25" cy="19.500" r="2.500" fill="#6b4b3a"/></svg></button>
  <button class="app open multi" aria-label="Photos"><svg width="32" height="32" viewBox="0 0 32 32"><rect width="32" height="32" rx="1" fill="url(#sky)"/><path d="M17 20l8-7 7 8v10H17z" fill="#3a7bd8"/><path d="M0 21l10-10 19 21H1q-1 0-1-1z" fill="#123f7c"/><circle cx="21" cy="8" r="3" fill="#fff"/></svg></button>
  <div class="tb-scroll"><svg width="12" height="10"><use href="#chev-up"/></svg><svg class="flip" width="12" height="10"><use href="#chev-up"/></svg></div>
  <div class="tray">
    <svg width="20" height="12" viewBox="0 0 20 12"><path d="M1 11l9-9 9 9" fill="none" stroke="#fff" stroke-width="1.500"/></svg>
    <svg width="18" height="24" viewBox="0 0 18 24"><path d="M1.500 6.500h10v11h-10zM12 11l5-3v8l-5-3M3 2q5-3 10 0M3 22q5 3 10 0" fill="none" stroke="#fff" stroke-width="1.300"/></svg>
    <svg width="26" height="18"><use href="#cloud"/></svg>
    <svg width="26" height="18"><use href="#cloud"/></svg>
    <svg width="24" height="20" viewBox="0 0 24 20"><path d="M1 7h4l5-5v16l-5-5H1zM13 7q2 3 0 6M16 4q4 6 0 12M19 2q5 8 0 16" fill="none" stroke="#fff" stroke-width="1.300"/></svg>
    <svg width="26" height="26" viewBox="0 0 26 26"><path d="M7 2l6 4-6 4-6-4zM19 2l6 4-6 4-6-4zM19 10l6 4-6 4-6-4zM13 19l5 0-5 3z" fill="#fff"/><rect x="1" y="12" width="13" height="13" rx="2" fill="#e0101f"/><text x="4" y="23" font-size="12" font-weight="700" fill="#fff">1</text></svg>
    <svg class="pen" width="22" height="22" viewBox="0 0 22 22"><path d="M9 15L17 2q3-2 3 2l-8 12-4 3zM9 8c-6 1-10 8-6 11s8-4 7-8M14 13c4-3 7-2 6 0s-5 0-4 3" fill="none" stroke="#fff" stroke-width="1.300"/></svg>
    <span class="lang">ENG</span>
    <span class="clock">14:29<br>21/02/2021</span>
    <span class="note"><svg width="24" height="26" viewBox="0 0 24 26"><path d="M0 0h24v18h-9l-6 6v-6H0z" fill="#fff"/><path d="M5 5h14M5 9h14M5 13h14" stroke="#2c3c44"/></svg><b>4</b></span>
    <i class="peek"></i>
  </div>
</div>
<script src="script.js"></script>
</body>
</html>
```

FILE: styles.css
```css
* { box-sizing: border-box; }
body { margin: 0; height: 100vh; display: flex; flex-direction: column; overflow: hidden; font-family: "Open Sans", "Noto Sans", sans-serif; font-size: 15px; color: #3b3b3b; background: #fff; }
button, input { font: inherit; color: inherit; border: 0; padding: 0; margin: 0; background: none; }
svg { display: block; flex: none; }
i { display: block; }
.defs { position: absolute; width: 0; height: 0; }
.caret { width: 8px; height: 5px; color: #000; }
.flip { transform: rotate(180deg); }

/* Paint title bar and tabs */
.titlebar { height: 34px; flex: none; display: flex; justify-content: space-between; }
.quick { display: flex; align-items: center; }
.app-logo { width: 24px; height: 24px; margin-right: 6px; }
.rule { width: 1px; height: 20px; background: #9a9a9a; }
.quick button { margin-left: 14px; }
.quick button:first-of-type { margin-left: 20px; }
.quick button:nth-of-type(4) { margin-left: 12px; }
.quick .rule:last-of-type { margin-left: 16px; }
.quick h1 { margin: 0 0 0 7px; font-size: 18px; line-height: 24px; font-weight: 400; color: #000; }
.winbtns { display: flex; align-items: center; gap: 54px; padding-right: 28px; }
.tabs { height: 35px; flex: none; display: flex; border-bottom: 1px solid #dadbdc; }
.tab { width: 76px; height: 33px; }
.tab.file { width: 84px; height: 34px; background: #1979ca; color: #fff; }
.tab.active { width: 82px; height: 35px; border: 1px solid #dadbdc; border-bottom: 0; background: #f5f6f7; }
.tabs-right { margin-left: auto; display: flex; align-items: center; gap: 12px; padding-right: 5px; }
.help { width: 22px; height: 22px; border-radius: 50%; background: #0067c5; color: #fff; line-height: 22px; }

/* Paint ribbon */
.ribbon { height: 138px; flex: none; display: flex; background: #f5f6f7; border-bottom: 1px solid #dadbdc; line-height: 21px; }
.group { display: flex; flex-direction: column; margin: 3px 0; border-right: 1px solid #e2e3e4; }
.label { margin-top: auto; text-align: center; color: #5c5c5c; padding-right: 2px; }
.tools { display: flex; }
.big { display: flex; flex-direction: column; align-items: center; width: 72px; }
.big .pic { height: 60px; display: flex; align-items: center; }
.big .caret { margin-top: 7px; }
.framed svg { border: 1px solid #8e8e8e; width: 48px; height: 48px; }
.stack { padding-top: 3px; }
.row { display: flex; align-items: center; gap: 5px; height: 32px; }
.off { color: #8d8d8d; }
.g-clip { width: 154px; padding-left: 3px; }
.g-clip .row { gap: 7px; margin-left: 3px; }
.g-image { width: 171px; }
.g-tools { width: 117px; }
.g-brush { width: 77px; }
.g-shapes { width: 354px; }
.g-size { width: 77px; }
.g-colors { width: 531px; }
.g-3d { width: 82px; }
.toolgrid { display: grid; grid-template-columns: 34px 34px 34px; grid-auto-rows: 44px; padding: 8px 6px 0; place-items: center; }
.toolgrid button { display: grid; place-items: center; width: 34px; height: 34px; }
.orange { color: #f0642d; }
.toolgrid .text-a { font: 700 32px "Liberation Serif", serif; color: #1f3a63; }
.gallery { display: flex; margin: 7px 7px 0 6px; width: 235px; height: 90px; border: 1px solid #dadbdc; background: #fbfcfd; flex: none; }
.shapes { width: 210px; height: 88px; }
.gal-scroll { flex: 1; display: flex; flex-direction: column; border-left: 1px solid #dadbdc; background: #f5f6f7; }
.gal-scroll button { flex: 1; display: grid; place-items: center; color: #3c4f70; }
.gal-scroll .caret { color: inherit; }
.gal-scroll .dim { color: #b4bac4; }
.g-shapes .row { gap: 4px; }
.navy svg:first-child { color: #2a5f9c; }
.color { width: 62px; height: 99px; margin-top: 3px; }
.color .pic { height: 56px; }
.g-colors .color:first-child { margin-left: 5px; }
.on.color { background: #c9e0f7; outline: 1px solid #62a2e4; outline-offset: -1px; }
.swatch { border: 1px solid #808080; }
.s1 { width: 48px; height: 48px; background: #ed1c24; box-shadow: inset 0 0 0 2px #d5e4f4; }
.s2 { width: 36px; height: 36px; background: #fff; box-shadow: inset 0 0 0 2px #f4f4f4; }
.pal { display: grid; grid-template-columns: repeat(10, 31px); grid-auto-rows: 31px; gap: 2px; margin: 4px 0 0 1px; }
.pal i { border: 1px solid #a0a0a0; }
.pal i[class] { box-shadow: inset 0 0 0 1px #fff; }
.g-3d .color { width: 76px; }
.black { background: #000; } .grey { background: #7f7f7f; } .darkred { background: #880015; } .red { background: #ed1c24; } .orange-c { background: #ff7f27; }
.yellow { background: #fff200; } .green { background: #22b14c; } .turq { background: #00a2e8; } .indigo { background: #3f48cc; } .purple { background: #a349a4; }
.white { background: #fff; } .lgrey { background: #c3c3c3; } .brown { background: #b97a57; } .rose { background: #ffaec9; } .gold { background: #ffc90e; }
.ltyellow { background: #efe4b0; } .lime { background: #b5e61d; } .ltturq { background: #99d9ea; } .bluegrey { background: #7092be; } .lavender { background: #c8bfe7; }

/* Canvas viewport */
.viewport { flex: 1; min-height: 0; display: flex; background: linear-gradient(#c5cfe0, #dbe5f2); }
.picture { flex: 1; min-width: 0; margin: 5px 0 0 5px; display: flex; flex-direction: column; background: #f3f2f1; overflow: hidden; color: #252423; border-bottom: 1px solid #fff; }
.vscroll { width: 26px; flex: none; display: flex; flex-direction: column; align-items: center; background: #f0f0f0; border-left: 1px solid #fff; padding: 10px 0 8px; gap: 6px; color: #606060; }
.vscroll i { width: 24px; height: 477px; background: #cdcdcd; }
.vscroll svg:last-child { margin-top: auto; }
.hscroll { height: 25px; flex: none; display: flex; align-items: center; background: #f0f0f0; color: #606060; }
.hscroll i { flex: 1; height: 24px; background: #cdcdcd; margin: 0 42px 0 7px; }
.left { transform: rotate(-90deg); margin-left: 7px; }
.right { transform: rotate(90deg); margin-right: 33px; }

/* Power BI title and tabs */
.pbi-title { height: 51px; flex: none; display: flex; align-items: center; background: #3b3a37; color: #fff; font-size: 17px; padding-top: 3px; }
.pbi-quick { display: flex; gap: 23px; padding-left: 27px; }
.pbi-name { flex: 1; text-align: center; }
.pbi-right { display: flex; align-items: center; width: 294px; margin-right: -11px; white-space: nowrap; }
.avatar { width: 24px; height: 24px; border-radius: 50%; background: #f3f2f1; margin: 0 47px 0 auto; }
.pbi-right svg { margin-right: 50px; }
.pbi-right svg:last-child { margin-right: 5px; }
.pbi-tabs { height: 47px; flex: none; display: flex; font-size: 19px; }
.pbi-tabs button { height: 47px; text-align: left; }
.pbi-tabs .p-file { padding: 8px 0 0 33px; width: 121px; }
.p-home { width: 103px; }
.p-help { width: 66px; }
.pbi-tabs .p-on { width: 148px; padding: 0 22px; background: #fff; color: #ab8a12; font-weight: 600; }
.p-on span { display: block; height: 47px; line-height: 50px; border-bottom: 5px solid #f2c811; white-space: nowrap; }

/* Power BI ribbon */
.pbi-ribbon { height: 142px; flex: none; display: flex; padding-top: 7px; font-size: 17px; line-height: 24px; box-shadow: 0 2px 4px #d5d3d1; position: relative; z-index: 1; }
.pg { display: flex; flex-direction: column; height: 133px; border-right: 1px solid #c8c6c4; }
.pl { margin-top: auto; text-align: center; font-size: 14px; line-height: 18px; }
.pg-struct { width: 313px; } .pg-cal { width: 133px; } .pg-rel { width: 131px; } .pg-calc { width: 297px; }
.namebox { display: flex; align-items: center; padding: 18px 0 0 17px; gap: 6px; }
.namebox input { width: 195px; height: 36px; border: 1px solid #8a8886; background: #fff; padding: 0 6px; }
.pbtns { display: flex; justify-content: center; padding-top: 6px; }
.pg-calc .pbtns { justify-content: flex-start; padding-left: 12px; font-size: 16px; }
.pbtns button { display: flex; flex-direction: column; align-items: center; gap: 7px; white-space: nowrap; }
.pbtns span svg { display: inline-block; vertical-align: 2px; }
.spill { overflow: visible; }
.w72 { width: 73px; } .w68 { width: 68px; } .w56 { width: 56px; }

/* Power BI body */
.pbi-body { flex: 1; min-height: 0; display: flex; }
.side { width: 61px; flex: none; border-right: 1px solid #d2d0ce; }
.side button { display: grid; place-items: center; width: 60px; height: 60px; border-left: 5px solid transparent; padding: 0 1px 2px 0; }
.side .on { border-color: #f2c811; }
.data { flex: 1; min-width: 0; display: flex; flex-direction: column; position: relative; }
.formula { display: flex; gap: 5px; padding: 6px 7px 6px; height: 54px; flex: none; }
.fbtns { width: 113px; flex: none; display: flex; align-items: center; gap: 23px; padding-left: 18px; border: 2px solid #e1dfdd; border-radius: 2px; }
.formula input { flex: 1; min-width: 0; border: 2px solid #e1dfdd; border-radius: 2px; }
.tablewrap { flex: 1; min-height: 0; overflow: hidden; position: relative; display: flex; align-items: flex-start; }
table { width: 100%; table-layout: fixed; border-collapse: separate; border-spacing: 0; font-size: 16px; line-height: 20px; border-top: 1px solid #c8c6c4; }
.c74 { width: 74px; } .c73 { width: 73px; } .c83 { width: 83px; } .c82 { width: 82px; } .c109 { width: 109px; } .c68 { width: 68px; } .c86 { width: 86px; } .c150 { width: 150px; } .c187 { width: 187px; }
th, td { height: 31px; padding: 0 7px 0 6px; border-right: 1px solid #d0cecc; border-bottom: 1px solid #c8c6c4; overflow: hidden; white-space: nowrap; }
td:nth-child(18) { padding-right: 5px; }
th { height: 32px; padding: 0 3px 0 6px; font-size: 15px; font-weight: 600; color: #5c5a58; }
th div { display: flex; align-items: center; justify-content: space-between; }
th.flush { padding-left: 0; }
th.mid span { flex: 1; text-align: center; padding-right: 9px; }
th button { width: 24px; height: 24px; flex: none; border: 2px solid #a6a6a6; background: #fff; display: grid; place-items: center; }
th .caret { color: #777; }
td { text-align: right; background: #fff; font-style: italic; color: #333; }
.tscroll { position: absolute; right: 0; top: 32px; bottom: 0; width: 22px; background: #e9e9e9; color: #606060; display: flex; flex-direction: column; align-items: center; padding-top: 6px; gap: 7px; }
.tscroll i { width: 22px; height: 17px; background: #c2c2c2; }
.marquee { position: absolute; left: 960px; top: 39px; z-index: 2; }

/* Fields pane */
.fields { width: 240px; flex: none; border-left: 2px solid #e1dfdd; display: flex; flex-direction: column; overflow: hidden; }
.fields h2 { margin: 20px 0 26px 17px; font-size: 22px; line-height: 32px; font-weight: 600; color: #3b3a39; }
.fsearch { height: 45px; flex: none; margin-left: 5px; border: 2px solid #c8c6c4; border-right: 0; border-radius: 3px 0 0 3px; background: #fff; display: flex; align-items: center; gap: 13px; padding-left: 15px; font-size: 18px; }
.fsearch input { width: 150px; }
input::placeholder { color: #252423; opacity: 1; }
.tree { margin-top: 6px; border-top: 2px solid #e1dfdd; padding-top: 13px; min-height: 0; }
.tree ul { margin: 0; padding: 0; list-style: none; height: 100%; overflow: hidden; font-size: 17px; }
.t { display: flex; align-items: center; height: 41px; padding-left: 5px; }
.t.cut { margin-top: -15px; }
.t span { margin-left: 18px; padding-bottom: 4px; }
.ch { width: 18px; height: 10px; margin-right: 10px; fill: none; stroke: #444; }
.gi { width: 20px; height: 18px; color: #bcd3e8; }
.gi.plain { color: #fff; }
.sel { background: #d2d0ce; border-radius: 3px 0 0 3px; }
.f { display: flex; align-items: center; height: 36px; padding-left: 21px; gap: 13px; white-space: nowrap; }
.f.first { margin-top: 6px; }

/* Paint status bar */
.status { height: 40px; flex: none; display: flex; background: #f0f0f0; border-top: 1px solid #d7d7d7; color: #000; font-size: 17px; }
.cell { width: 245px; display: flex; align-items: center; gap: 6px; padding: 3px 0 0 4px; margin: 1px 0; border-right: 1px solid #d7d7d7; white-space: nowrap; }
.cell svg { margin-bottom: 4px; }
.cell.wide { flex: 1; }
.zoom { display: flex; align-items: center; width: 321px; padding-left: 25px; gap: 10px; }
.zoom label { width: 45px; padding-top: 3px; }
.zoom button { width: 22px; height: 22px; flex: none; border: 1px solid #777; border-radius: 50%; background: linear-gradient(#fff, #d0d0d0); font-size: 20px; line-height: 18px; font-weight: 700; color: #555; }
.zoom input { appearance: none; width: 128px; height: 28px; margin: 0 5px 0 8px; background: linear-gradient(#d6d6d6, #d6d6d6) center / 100% 6px no-repeat; }
.zoom input::-webkit-slider-thumb { appearance: none; width: 15px; height: 28px; background: #0078d7; clip-path: polygon(0 0, 100% 0, 100% 78%, 50% 100%, 0 78%); }

/* Windows taskbar */
.taskbar { height: 60px; flex: none; display: flex; background: #37464e; color: #fff; }
.taskbar > button { display: grid; place-items: center; }
.start { width: 72px; }
.tsearch { width: 515px; display: flex; align-items: center; gap: 17px; padding-left: 16px; background: #f2f2f2; border: 2px solid #c2c2c2; color: #222; font-size: 22px; }
.tsearch input { width: 400px; padding-top: 3px; }
.sys { width: 73px; }
.app { width: 60px; margin: 0 1px; border-bottom: 3px solid transparent; border-top: 3px solid transparent; }
.sys + .app { margin-left: 4px; }
.app.open { background: linear-gradient(#f9adb4, #f9adb4) center bottom / 48px 3px no-repeat border-box; }
.app.multi { background: linear-gradient(90deg, #f9adb4 34px, #c78a92 34px) center bottom / 48px 3px no-repeat border-box; }
.app.current { background: linear-gradient(#f9adb4, #f9adb4) center bottom / 60px 3px no-repeat border-box, #626e75; }
.tb-scroll { width: 26px; margin-left: 4px; background: #f0f0f0; color: #555; display: flex; flex-direction: column; align-items: center; justify-content: space-between; padding: 10px 0 8px; }
.tray { flex: 1; display: flex; align-items: center; background: linear-gradient(90deg, #36454d, #24343e 25%, #2c3d46 60%, #30424b); padding-left: 14px; font-size: 17px; }
.tray > svg { margin-right: 23px; }
.tray > svg:first-child { margin-right: 30px; }
.tray > svg:nth-child(2) { margin-right: 25px; }
.tray > .pen { margin: 0 29px 0 6px; }
.lang { width: 54px; }
.clock { flex: 1; text-align: center; line-height: 28px; white-space: nowrap; }
.note { position: relative; width: 36px; height: 26px; margin: 0 19px 0 26px; }
.note b { position: absolute; left: 11px; top: 10px; width: 24px; height: 24px; border: 1px solid #aaa; border-radius: 50%; background: #333b40; text-align: center; font-size: 17px; line-height: 22px; }
.peek { width: 7px; height: 60px; border-left: 1px solid #8a949a; }
```

FILE: script.js
```js
const headers = ["Cost", "S_1", "S_2", "S_3", "S_4", "S_5", "S_6", "S_7", "S_8", "S_9", "S_10", "S_11", "S_12", "Prod_cls", "Oh", "Oh_1", "Last Sales", "Last Purchase Date", "L"];
const nov = "21 November 1997";
const rows = [
  [1732, "", ""], [1740, "", ""], [1760, "", ""], [1708, "", nov], [1708, "", nov], [1708, "", nov], [1708, "", nov],
  [1708, "", nov], [1708, "", nov], [1760, "", nov], [1740, "06 April 1999", "22 March 1999"], [1740, "", nov],
  [1741, "04 December 2003", "28 November 2003"], [1713, "08 April 2009", "08 April 2009"]
];
const filter = '<button aria-label="Filter"><svg class="caret"><use href="#caret"/></svg></button>';
const cls = { "Cost": "flush", "Last Sales": "mid" };
document.querySelector("thead tr").innerHTML = headers.map(h =>
  `<th class="${cls[h] || ""}"><div><span>${h}</span>${h === "L" ? "" : filter}</div></th>`).join("");
document.querySelector("tbody").innerHTML = rows.map(([prod, sales, purchase]) =>
  "<tr>" + [...Array(13).fill(0), prod, 1, 1, sales, purchase, ""].map(v => `<td>${v}</td>`).join("") + "</tr>").join("");
```
